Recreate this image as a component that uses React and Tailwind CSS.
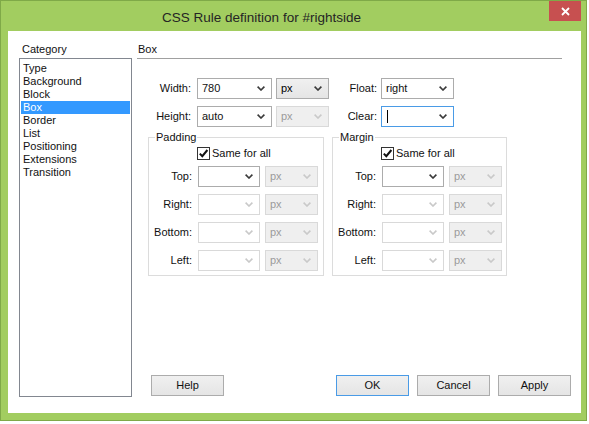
import React from "react";

const categories = [
  "Type",
  "Background",
  "Block",
  "Box",
  "Border",
  "List",
  "Positioning",
  "Extensions",
  "Transition",
];

function Chevron({ dim }) {
  return (
    <svg
      width="8"
      height="5"
      viewBox="0 0 8 5"
      className={dim ? "text-[#c9c9c9]" : "text-[#3a3a3a]"}
    >
      <path
        d="M0.6 0.6 L4 4 L7.4 0.6"
        fill="none"
        stroke="currentColor"
        strokeWidth="1.6"
      />
    </svg>
  );
}

// Windows 8 style combo box (editable = white, list = grey)
function Combo({ value = "", w, list, disabled, focused }) {
  let cls =
    "flex items-center justify-between h-[21px] pl-[4px] pr-[6px] border leading-none ";
  if (list) {
    cls += disabled
      ? "bg-[#efefef] border-[#d9d9d9] text-[#9b9b9b]"
      : "bg-linear-to-b from-[#f0f0f0] to-[#e5e5e5] border-[#acacac] text-black";
  } else {
    cls += disabled
      ? "bg-white border-[#d9d9d9]"
      : focused
      ? "bg-white border-[#4a9be6]"
      : "bg-white border-[#acacac]";
  }
  return (
    <div className={cls + " " + w}>
      {focused ? (
        <span className="block w-[1px] h-[13px] bg-black ml-[1px]" />
      ) : (
        <span>{value}</span>
      )}
      <Chevron dim={disabled} />
    </div>
  );
}

function CheckBox() {
  return (
    <span className="flex items-center justify-center w-[13px] h-[13px] border border-[#333] bg-white">
      <svg width="11" height="11" viewBox="0 0 11 11">
        <path
          d="M1.8 5.6 L4.3 8.2 L9.4 2"
          fill="none"
          stroke="#111"
          strokeWidth="2"
        />
      </svg>
    </span>
  );
}

function SideGroup({ title, w }) {
  const rows = ["Top:", "Right:", "Bottom:", "Left:"];
  return (
    <div
      className={
        "relative border border-[#dcdcdc] h-[139px] pt-[9px] pl-[1px] " + w
      }
    >
      <span className="absolute left-[6px] top-[-8px] px-[1px] bg-white leading-[14px]">
        {title}
      </span>
      <div className="flex items-center gap-[2px] ml-[47px]">
        <CheckBox />
        <span className="leading-[13px]">Same for all</span>
      </div>
      <div className="flex flex-col gap-[7px] mt-[6px]">
        {rows.map((r, i) => (
          <div key={r} className="flex items-center">
            <span className="w-[42px] text-right">{r}</span>
            <Combo w="w-[62px] ml-[6px]" disabled={i > 0} />
            <Combo w="w-[53px] ml-[5px]" list disabled value="px" />
          </div>
        ))}
      </div>
    </div>
  );
}

function Btn({ label, def }) {
  return (
    <button
      className={
        "w-[73px] h-[21px] border bg-linear-to-b from-[#f0f0f0] to-[#e5e5e5] leading-none " +
        (def ? "border-[#4a9be6]" : "border-[#acacac]")
      }
    >
      {label}
    </button>
  );
}

export default function App() {
  return (
    <div className="w-[589px] h-[424px] bg-white font-['Liberation_Sans',Arial,sans-serif] text-[11px] text-[#111]">
      <div className="w-[587px] h-[421px] border border-[#7fa948] bg-[#a2cd60] flex flex-col">
        {/* title bar */}
        <div className="flex h-[30px] shrink-0">
          <div className="w-[521px] text-center text-[13.5px] text-[#252525] pt-[7px]">
            CSS Rule definition for #rightside
          </div>
          <div className="ml-[27px] w-[32px] h-[20px] bg-[#c75050] flex items-center justify-center">
            <svg width="9" height="9" viewBox="0 0 9 9">
              <path
                d="M1 1 L8 8 M8 1 L1 8"
                stroke="#fff"
                strokeWidth="1.8"
              />
            </svg>
          </div>
        </div>

        {/* client area */}
        <div className="ml-[7px] mr-[5px] mb-[7px] h-[382px] bg-white pl-[11px] pt-[11px] flex gap-[5px]">
          {/* category column */}
          <div className="w-[113px] flex flex-col">
            <div className="h-[16px] pl-[3px] leading-[14px]">Category</div>
            <div className="h-[339px] border border-[#828790] px-[1px] pt-[3px]">
              {categories.map((c) => (
                <div
                  key={c}
                  className={
                    "h-[13px] leading-[13px] pl-[2px] " +
                    (c === "Box" ? "bg-[#3399ff] text-white" : "")
                  }
                >
                  {c}
                </div>
              ))}
            </div>
          </div>

          {/* box panel */}
          <div className="w-[434px] h-[355px] flex flex-col">
            <div className="h-[17px] mr-[9px] border-b border-[#a0a0a0] pl-[1px] leading-[14px]">
              Box
            </div>

            <div className="flex items-center mt-[19px]">
              <span className="w-[54px] text-right">Width:</span>
              <Combo w="w-[75px] ml-[6px]" value="780" />
              <Combo w="w-[53px] ml-[4px]" list value="px" />
              <span className="w-[48px] text-right">Float:</span>
              <Combo w="w-[73px] ml-[4px]" value="right" />
            </div>
            <div className="flex items-center mt-[7px]">
              <span className="w-[54px] text-right">Height:</span>
              <Combo w="w-[75px] ml-[6px]" value="auto" />
              <Combo w="w-[53px] ml-[4px]" list disabled value="px" />
              <span className="w-[48px] text-right">Clear:</span>
              <Combo w="w-[73px] ml-[4px]" focused />
            </div>

            <div className="flex gap-[8px] ml-[11px] mt-[10px]">
              <SideGroup title="Padding" w="w-[176px]" />
              <SideGroup title="Margin" w="w-[175px]" />
            </div>

            <div className="mt-auto mb-[1px] flex items-center">
              <div className="ml-[14px]">
                <Btn label="Help" />
              </div>
              <div className="ml-auto flex gap-[8px]">
                <Btn label="OK" def />
                <Btn label="Cancel" />
                <Btn label="Apply" />
              </div>
            </div>
          </div>
        </div>
      </div>
    </div>
  );
}
